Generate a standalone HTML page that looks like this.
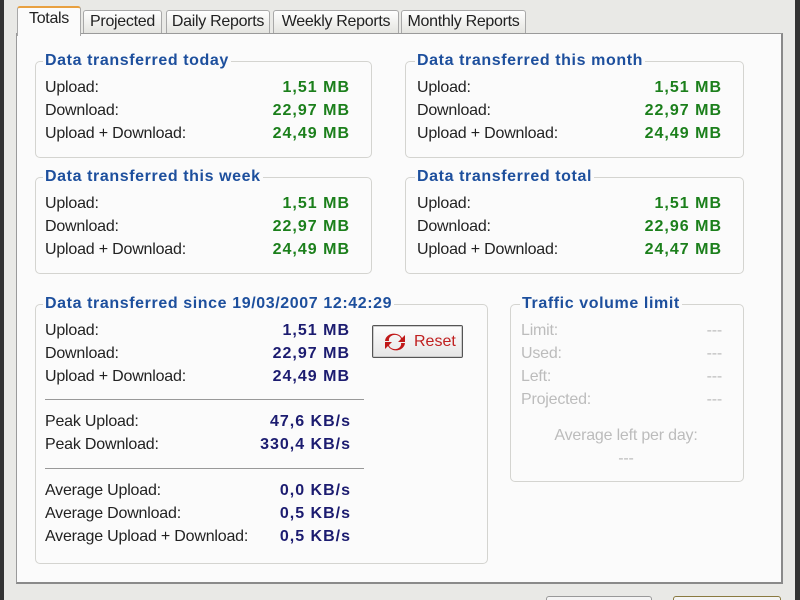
<!DOCTYPE html>
<html><head><style>
html,body{margin:0;width:800px;height:600px;overflow:hidden}
body{background:#e9e9e6;position:relative;font-family:"Liberation Sans",Arial,sans-serif;font-size:16px;color:#222}
.a{position:absolute}
.panel{left:16px;top:33px;width:764px;height:548px;background:#fbfbfb;border:1px solid #9a9a9a;border-right:2px solid #8a8a8a;border-bottom:2px solid #8a8a8a}
.tab{top:10px;height:22px;background:linear-gradient(#fff,#e4e4e0);border:1px solid #a8a8a8;border-bottom:none;border-radius:3px 3px 0 0;font-size:16px;line-height:22px;text-align:center;color:#222;letter-spacing:-0.3px}
.box{border:1px solid #d4d4d0;border-radius:5px}
.t{font-weight:bold;color:#1d4f9d;background:#fbfbfb;padding:0 2px;font-size:16px;line-height:18px;letter-spacing:0.6px}
.l{font-size:16px;line-height:23px;letter-spacing:-0.2px}
.v{font-weight:bold;text-align:right;font-size:16px;line-height:23px;letter-spacing:1px}
.g{color:#1b7f1b}.b{color:#1c1c70}.gr{color:#bcbcbc}
</style></head><body>
<div class="a" style="left:0;top:0;width:4px;height:600px;background:#333"></div>
<div class="a" style="left:795px;top:0;width:5px;height:600px;background:#333"></div>
<div class="a panel"></div>
<div class="a tab" style="left:83px;width:77px">Projected</div>
<div class="a tab" style="left:166px;width:102px">Daily Reports</div>
<div class="a tab" style="left:273px;width:124px">Weekly Reports</div>
<div class="a tab" style="left:401px;width:123px">Monthly Reports</div>
<div class="a tab" style="left:17px;top:6px;height:28px;width:62px;background:#fbfbfb;border-top:2px solid #e8a040">Totals</div>

<div class="a box" style="left:35px;top:61px;width:335px;height:95px"></div>
<div class="a t" style="left:43px;top:52px">Data transferred today</div>
<div class="a l" style="left:45px;top:76px">Upload:<br>Download:<br>Upload + Download:</div>
<div class="a v g" style="left:200px;width:150px;top:76px">1,51 MB<br>22,97 MB<br>24,49 MB</div>

<div class="a box" style="left:405px;top:61px;width:337px;height:95px"></div>
<div class="a t" style="left:415px;top:52px">Data transferred this month</div>
<div class="a l" style="left:417px;top:76px">Upload:<br>Download:<br>Upload + Download:</div>
<div class="a v g" style="left:570px;width:152px;top:76px">1,51 MB<br>22,97 MB<br>24,49 MB</div>

<div class="a box" style="left:35px;top:177px;width:335px;height:95px"></div>
<div class="a t" style="left:43px;top:168px">Data transferred this week</div>
<div class="a l" style="left:45px;top:192px">Upload:<br>Download:<br>Upload + Download:</div>
<div class="a v g" style="left:200px;width:150px;top:192px">1,51 MB<br>22,97 MB<br>24,49 MB</div>

<div class="a box" style="left:405px;top:177px;width:337px;height:95px"></div>
<div class="a t" style="left:415px;top:168px">Data transferred total</div>
<div class="a l" style="left:417px;top:192px">Upload:<br>Download:<br>Upload + Download:</div>
<div class="a v g" style="left:570px;width:152px;top:192px">1,51 MB<br>22,96 MB<br>24,47 MB</div>

<div class="a box" style="left:35px;top:304px;width:451px;height:258px"></div>
<div class="a t" style="left:43px;top:295px">Data transferred since 19/03/2007 12:42:29</div>
<div class="a l" style="left:45px;top:319px">Upload:<br>Download:<br>Upload + Download:</div>
<div class="a v b" style="left:200px;width:150px;top:319px">1,51 MB<br>22,97 MB<br>24,49 MB</div>
<div class="a" style="left:45px;top:399px;width:319px;height:1px;background:#999"></div>
<div class="a l" style="left:45px;top:410px">Peak Upload:<br>Peak Download:</div>
<div class="a v b" style="left:200px;width:151px;top:410px">47,6 KB/s<br>330,4 KB/s</div>
<div class="a" style="left:45px;top:468px;width:319px;height:1px;background:#999"></div>
<div class="a l" style="left:45px;top:479px">Average Upload:<br>Average Download:<br>Average Upload + Download:</div>
<div class="a v b" style="left:200px;width:151px;top:479px">0,0 KB/s<br>0,5 KB/s<br>0,5 KB/s</div>

<div class="a" style="left:372px;top:325px;width:89px;height:31px;border:1px solid #555;border-radius:2px;background:linear-gradient(#fdfdfd,#e6e6e6);box-shadow:inset 0 0 0 1px #ccc"></div>
<svg class="a" style="left:382px;top:331px" width="26" height="22" viewBox="0 0 26 22"><path d="M3 10 A9 8 0 0 1 20 7 L23 4 L23 11 L16 11 L19 8 A6 5 0 0 0 7 10 Z" fill="#c01818"/><path d="M23 12 A9 8 0 0 1 6 15 L3 18 L3 11 L10 11 L7 14 A6 5 0 0 0 19 12 Z" fill="#c01818"/></svg>
<div class="a" style="left:414px;top:333px;color:#c02020;font-size:16px">Reset</div>

<div class="a box" style="left:510px;top:304px;width:232px;height:176px"></div>
<div class="a t" style="left:520px;top:295px">Traffic volume limit</div>
<div class="a l gr" style="left:521px;top:319px">Limit:<br>Used:<br>Left:<br>Projected:</div>
<div class="a l gr" style="left:680px;width:42px;text-align:right;top:319px">---<br>---<br>---<br>---</div>
<div class="a l gr" style="left:510px;width:232px;text-align:center;top:424px">Average left per day:<br>---</div>

<div class="a" style="left:546px;top:596px;width:104px;height:10px;border:1px solid #999;border-radius:3px;background:#f4f4f4"></div>
<div class="a" style="left:673px;top:596px;width:106px;height:10px;border:1px solid #8a7a40;border-radius:3px;background:#f4f4f4"></div>
</body></html>
